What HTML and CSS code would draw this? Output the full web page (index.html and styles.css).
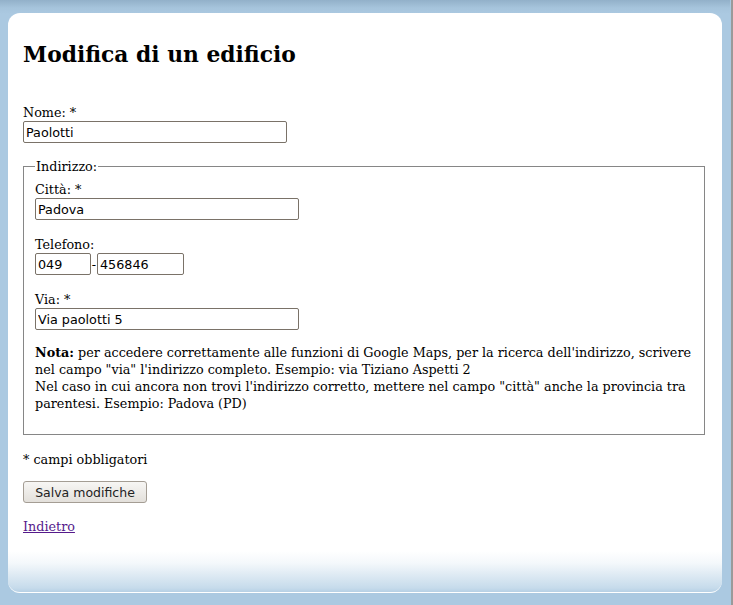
FILE: index.html
```html
<!DOCTYPE html>
<html lang="it">
<head>
<meta charset="utf-8">
<title>Modifica di un edificio</title>
<link rel="stylesheet" href="styles.css">
</head>
<body>
<div class="page">
  <div class="card">
    <h1 class="title">Modifica di un edificio</h1>
    <form class="form">
      <div class="field field-top">
        <label class="label">Nome: *</label>
        <input class="input input-wide" type="text" value="Paolotti">
      </div>
      <fieldset class="address">
        <legend class="legend">Indirizzo:</legend>
        <div class="field field-first">
          <label class="label">Città: *</label>
          <input class="input input-wide" type="text" value="Padova">
        </div>
        <div class="field">
          <label class="label">Telefono:</label>
          <div class="phone">
            <input class="input input-prefix" type="text" value="049"><span class="dash">-</span><input class="input input-number" type="text" value="456846">
          </div>
        </div>
        <div class="field">
          <label class="label">Via: *</label>
          <input class="input input-wide" type="text" value="Via paolotti 5">
        </div>
        <p class="note"><strong>Nota:</strong> per accedere correttamente alle funzioni di Google Maps, per la ricerca dell'indirizzo, scrivere nel campo "via" l'indirizzo completo. Esempio: via Tiziano Aspetti 2<br>Nel caso in cui ancora non trovi l'indirizzo corretto, mettere nel campo "città" anche la provincia tra parentesi. Esempio: Padova (PD)</p>
      </fieldset>
      <p class="required">* campi obbligatori</p>
      <button class="button" type="button">Salva modifiche</button>
      <a class="back" href="#">Indietro</a>
    </form>
  </div>
  <div class="edge"></div>
</div>
</body>
</html>
```
FILE: styles.css
```css
html, body {
  margin: 0;
  padding: 0;
  height: 100%;
}
body {
  background: #abc9e1;
  font-family: "DejaVu Serif", serif;
  font-size: 12.75px;
  color: #000;
}
.page {
  display: flex;
  min-height: 605px;
  background: linear-gradient(to bottom, #92b0c9 0px, #a6c4dc 8px, #abc9e1 14px);
}
.card {
  margin: 13px 0 12px 8px;
  width: 714px;
  box-sizing: border-box;
  padding: 1px 17px 0 15px;
  background: linear-gradient(to bottom, #fff 0px, #fff 538px, #f4f8fb 550px, #c6dbeb 575px, #b2cde3 580px);
  border-radius: 12px;
  border-bottom: 1px solid #fff;
  height: 580px;
}
.edge {
  margin-left: auto;
  width: 3px;
  background: linear-gradient(to right, #abc9e1 0, #abc9e1 1px, #9a9a9a 1px);
}
.title {
  font-size: 21.8px;
  font-weight: bold;
  margin: 26px 0 0 0;
  line-height: 30px;
}
.form {
  margin-top: 34px;
  display: flex;
  flex-direction: column;
  align-items: flex-start;
}
.field {
  display: flex;
  flex-direction: column;
  align-items: flex-start;
  margin-bottom: 16px;
}
.field-top { margin-bottom: 0; }
.field-first { margin-top: 6px; }
.label {
  line-height: 17px;
}
.input {
  font-family: "DejaVu Sans", sans-serif;
  font-size: 12.75px;
  height: 22px;
  box-sizing: border-box;
  border: 1px solid #7a7268;
  border-radius: 2px;
  padding: 1px 2px;
  background: #fff;
  color: #000;
  margin: 0;
}
.input-wide { width: 264px; }
.input-prefix { width: 56px; }
.input-number { width: 87px; }
.phone {
  display: flex;
  align-items: center;
}
.dash {
  width: 6px;
  text-align: center;
}
.address {
  align-self: stretch;
  margin: 15px 0 0 0;
  padding: 0 10px 0 11px;
  border: 1px solid #868686;
  box-sizing: border-box;
  height: 277px;
}
.legend {
  padding: 0 1px;
  line-height: 17px;
}
.note {
  margin: -2px 0 0 0;
  line-height: 17px;
}
.required {
  margin: 16px 0 0 0;
  line-height: 17px;
}
.button {
  margin-top: 13px;
  width: 124px;
  height: 22px;
  font-family: "DejaVu Sans", sans-serif;
  font-size: 12.5px;
  color: #222;
  border: 1px solid #a49d94;
  border-radius: 3px;
  background: linear-gradient(to bottom, #f7f6f4, #e3e0db);
  padding: 0;
}
.back {
  margin-top: 15px;
  color: #551a8b;
  line-height: 17px;
}
```
